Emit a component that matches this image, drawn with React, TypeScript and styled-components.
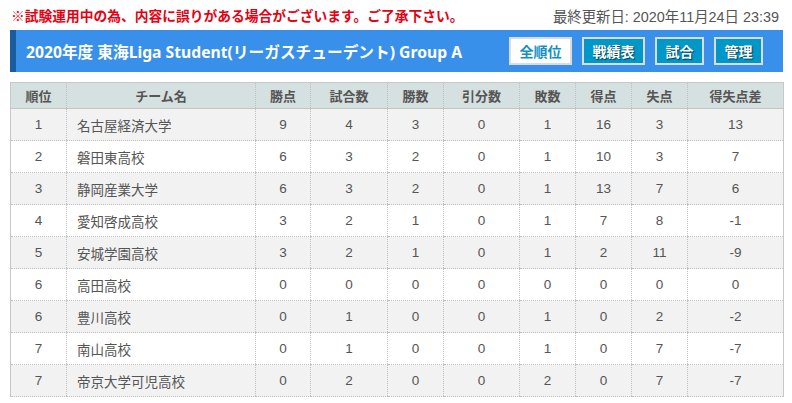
import React from "react";
import styled, { createGlobalStyle } from "styled-components";

const Global = createGlobalStyle`
  html, body { margin: 0; padding: 0; background: #fff; }
  body { font-family: "Liberation Sans", "Noto Sans CJK JP", sans-serif; }
`;

const Page = styled.div`
  width: 773px;
  padding: 0 9px 0 10px;
`;

const TopLine = styled.div`
  height: 30px;
  display: flex;
  align-items: center;
  justify-content: space-between;
  padding-right: 4px;
`;

const Notice = styled.span`
  color: #e60012;
  font-family: "Noto Sans CJK JP", sans-serif;
  font-weight: 700;
  font-size: 13.75px;
  margin-left: 1px;
`;

const Updated = styled.span`
  color: #555;
  font-family: "Liberation Sans", "Noto Sans CJK JP", sans-serif;
  font-size: 14.4px;
`;

const TitleBar = styled.div`
  height: 42px;
  background: #3890ea;
  border-left: 6px solid #1a5c9e;
  display: flex;
  align-items: center;
  padding: 0 20px 0 10px;
  box-sizing: border-box;
`;

const Title = styled.h1`
  margin: 0;
  flex: 1;
  color: #fff;
  font-family: "Noto Sans", "Noto Sans CJK JP", sans-serif;
  font-weight: 700;
  font-size: 15.7px;
  white-space: nowrap;
`;

const Nav = styled.nav`
  display: flex;
  gap: 10px;
`;

const NavButton = styled.a<{ $active?: boolean }>`
  height: 28px;
  box-sizing: border-box;
  padding: 0 8.5px;
  display: flex;
  align-items: center;
  border: 2px solid #dcdcdc;
  background: ${(p) => (p.$active ? "#fff" : "#0097c9")};
  color: ${(p) => (p.$active ? "#1090c6" : "#fff")};
  text-shadow: ${(p) => (p.$active ? "none" : "1px 1px 1px rgba(0,0,0,0.6)")};
  font-family: "Noto Sans CJK JP", sans-serif;
  font-weight: 700;
  font-size: 14px;
  cursor: pointer;
`;

const Table = styled.table`
  margin-top: 10px;
  width: 773px;
  border-collapse: collapse;
  table-layout: fixed;
  border-left: 1px solid #c8c8c8;
  border-right: 1px solid #c8c8c8;
  border-top: 1px solid #c8c8c8;
  color: #555;
`;

const Th = styled.th`
  height: 25px;
  padding: 0;
  background: #d5e0e0;
  font-family: "Noto Sans CJK JP", sans-serif;
  font-weight: 700;
  font-size: 13px;
  color: #555;
  text-align: center;
  border-left: 1px dotted #bfbfbf;
  border-bottom: 1px solid #c4c4c4;
  &:first-child { border-left: none; }
`;

const Tr = styled.tr<{ $odd: boolean }>`
  background: ${(p) => (p.$odd ? "#f2f2f2" : "#fff")};
`;

const Td = styled.td<{ $left?: boolean }>`
  height: 31px;
  padding: 0 ${(p) => (p.$left ? "10px" : "0")};
  text-align: ${(p) => (p.$left ? "left" : "center")};
  font-family: "Liberation Sans", "Noto Sans CJK JP", sans-serif;
  font-size: 13.5px;
  color: #555;
  border-left: 1px dotted #bfbfbf;
  border-bottom: 1px dotted #bfbfbf;
  &:first-child { border-left: none; }
`;

const cols = [56, 189, 55, 77, 56, 76, 56, 56, 56, 96];
const heads = ["順位", "チーム名", "勝点", "試合数", "勝数", "引分数", "敗数", "得点", "失点", "得失点差"];

const rows: (string | number)[][] = [
  [1, "名古屋経済大学", 9, 4, 3, 0, 1, 16, 3, 13],
  [2, "磐田東高校", 6, 3, 2, 0, 1, 10, 3, 7],
  [3, "静岡産業大学", 6, 3, 2, 0, 1, 13, 7, 6],
  [4, "愛知啓成高校", 3, 2, 1, 0, 1, 7, 8, -1],
  [5, "安城学園高校", 3, 2, 1, 0, 1, 2, 11, -9],
  [6, "高田高校", 0, 0, 0, 0, 0, 0, 0, 0],
  [6, "豊川高校", 0, 1, 0, 0, 1, 0, 2, -2],
  [7, "南山高校", 0, 1, 0, 0, 1, 0, 7, -7],
  [7, "帝京大学可児高校", 0, 2, 0, 0, 2, 0, 7, -7],
];

export default function App() {
  return (
    <Page>
      <Global />
      <TopLine>
        <Notice>※試験運用中の為、内容に誤りがある場合がございます。ご了承下さい。</Notice>
        <Updated>最終更新日: 2020年11月24日 23:39</Updated>
      </TopLine>
      <TitleBar>
        <Title>2020年度 東海Liga Student(リーガスチューデント) Group A</Title>
        <Nav>
          <NavButton $active>全順位</NavButton>
          <NavButton>戦績表</NavButton>
          <NavButton>試合</NavButton>
          <NavButton>管理</NavButton>
        </Nav>
      </TitleBar>
      <Table>
        <colgroup>
          {cols.map((w, i) => (
            <col key={i} style={{ width: w }} />
          ))}
        </colgroup>
        <thead>
          <tr>
            {heads.map((h) => (
              <Th key={h}>{h}</Th>
            ))}
          </tr>
        </thead>
        <tbody>
          {rows.map((r, i) => (
            <Tr key={i} $odd={i % 2 === 0}>
              {r.map((c, j) => (
                <Td key={j} $left={j === 1}>
                  {c}
                </Td>
              ))}
            </Tr>
          ))}
        </tbody>
      </Table>
    </Page>
  );
}
